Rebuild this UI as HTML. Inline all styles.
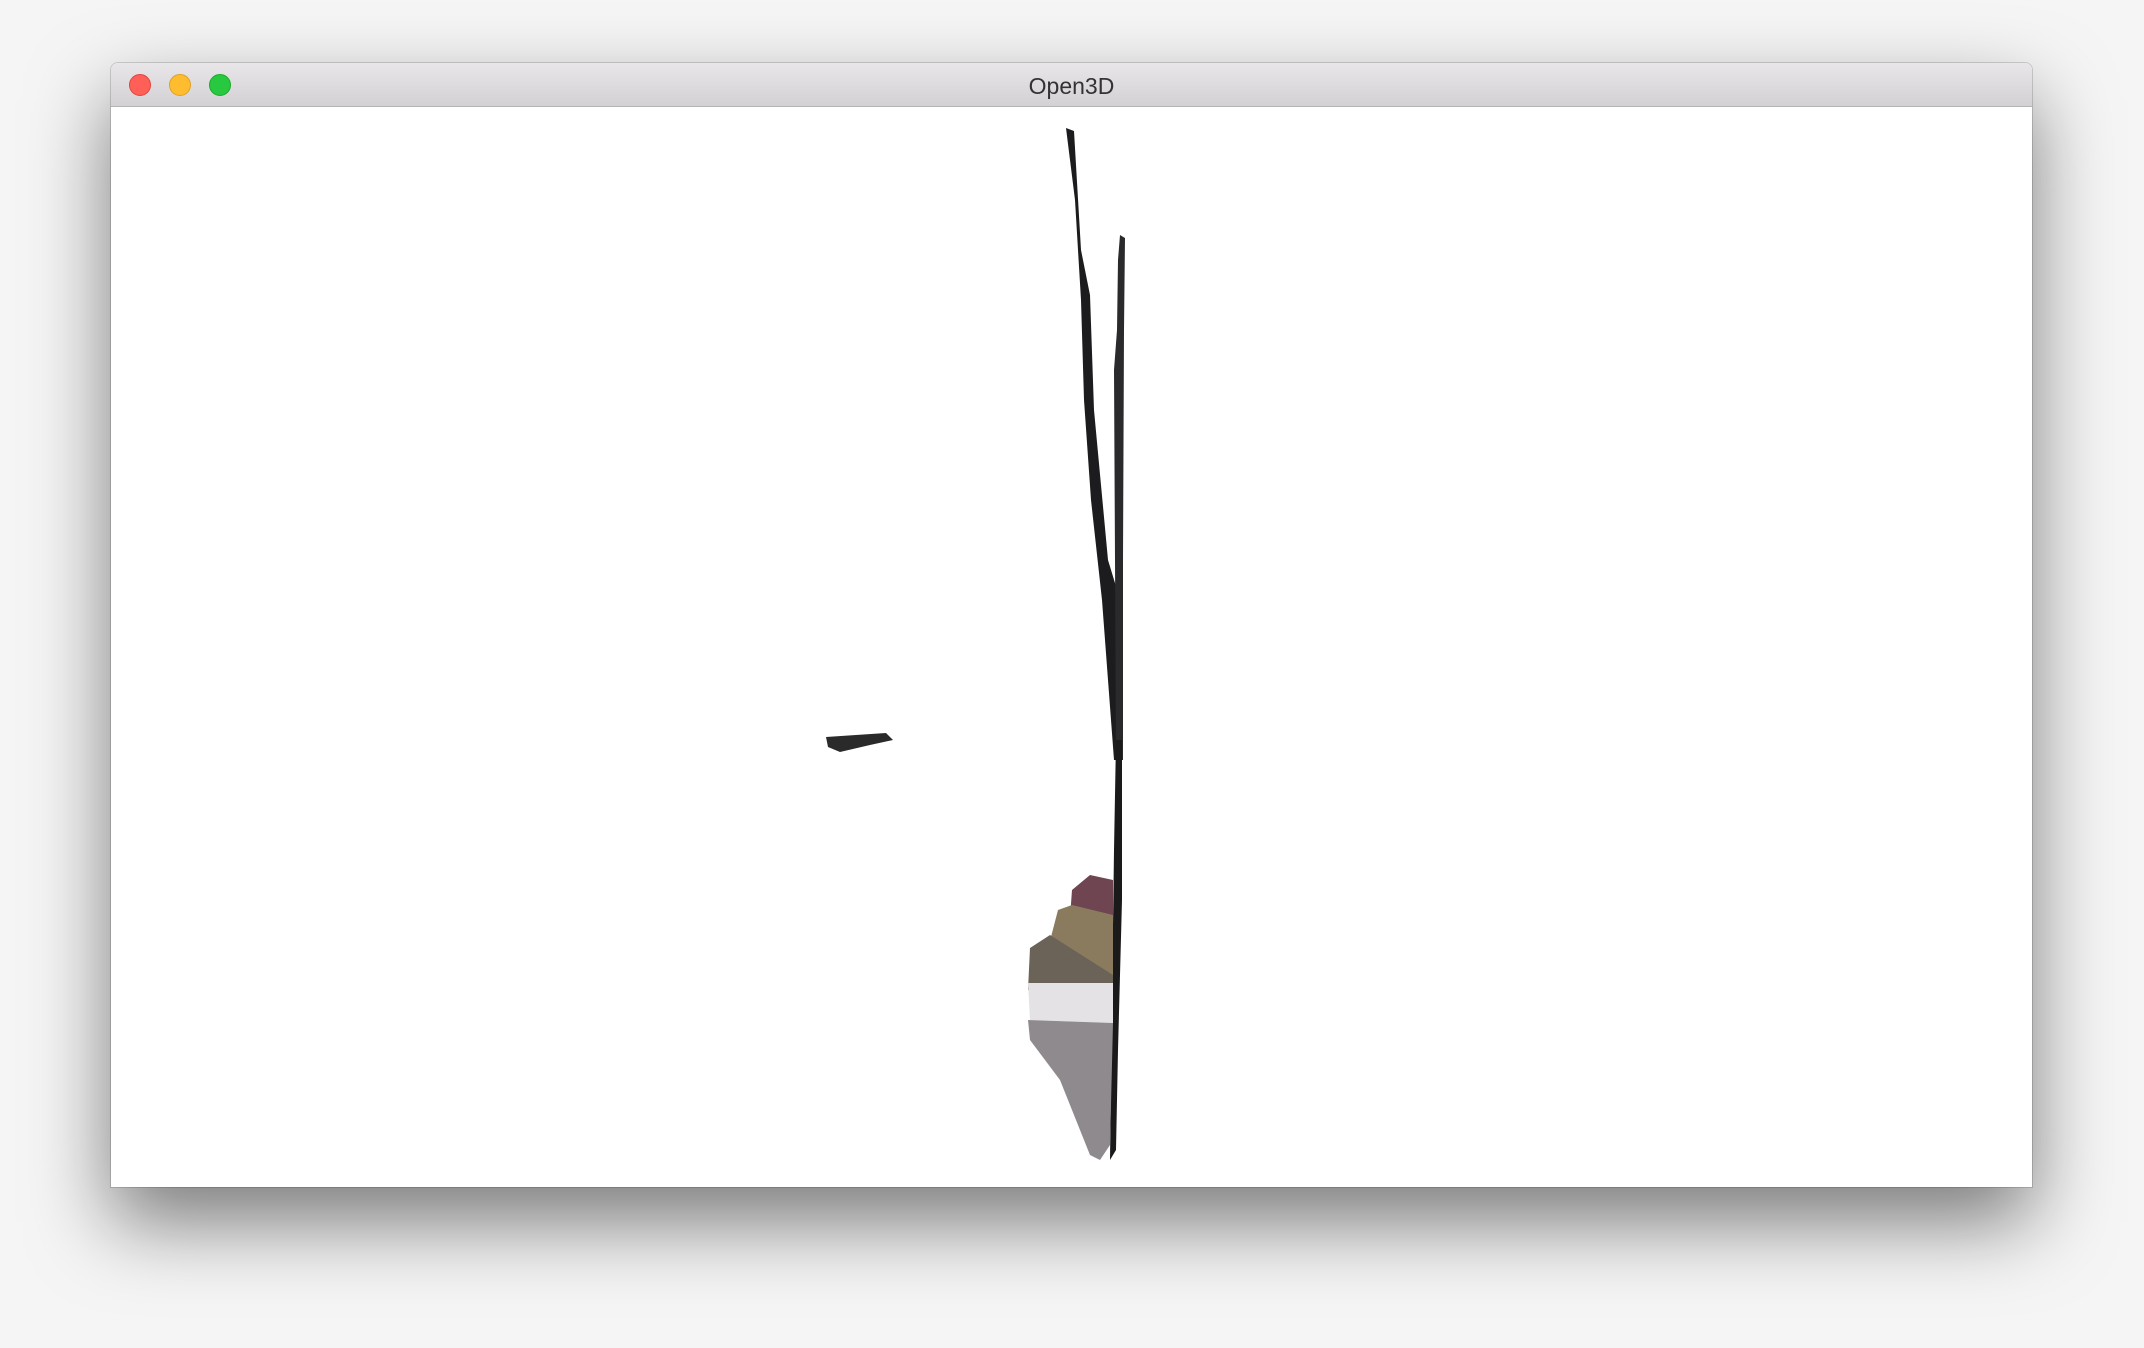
<!DOCTYPE html>
<html><head><style>
html,body{margin:0;padding:0;width:2144px;height:1348px;background:#f5f5f5;overflow:hidden}
.win{position:absolute;left:111px;top:63px;width:1921px;height:1124px;background:#fff;border-radius:7px 7px 0 0;box-shadow:0 35px 80px rgba(0,0,0,.5),0 0 0 1px rgba(0,0,0,.15);overflow:hidden}
.tb{position:absolute;left:0;top:0;width:100%;height:44px;background:linear-gradient(#e8e6e8,#d3d1d3);border-bottom:1px solid #b5b3b5;box-sizing:border-box}
.l{position:absolute;top:11px;width:22px;height:22px;border-radius:50%;box-sizing:border-box}
.t{position:absolute;left:0;right:0;top:10px;text-align:center;font:23px "Liberation Sans",sans-serif;color:#333}
svg{position:absolute;left:0;top:0}
</style></head><body>
<div class="win">
<div class="tb">
<div class="l" style="left:18px;background:#fe5f57;border:1px solid #e0443e"></div>
<div class="l" style="left:58px;background:#febc2e;border:1px solid #dea123"></div>
<div class="l" style="left:98px;background:#28c840;border:1px solid #1aab29"></div>
<div class="t">Open3D</div>
</div>
</div>
<svg width="2144" height="1348" viewBox="0 0 2144 1348">
<polygon points="1066,128 1074,131 1081,250 1090,295 1094,410 1108,560 1118,593 1120,760 1114,760 1102,600 1091,500 1084,400 1081,300 1075,200" fill="#1c1c1e"/>
<polygon points="1120,235 1125,238 1124,330 1123,560 1123,760 1116,760 1115,560 1114,370 1117,330 1118,260" fill="#2a2a2c"/>
<polygon points="1116,740 1122,740 1122,900 1118,1050 1116,1150 1110,1160 1112,1000 1114,850" fill="#1a1a1a"/>
<polygon points="1072,890 1090,875 1113,880 1113,915 1070,918" fill="#6e4550"/>
<polygon points="1058,910 1072,905 1113,915 1113,975 1050,980 1045,960" fill="#8a7a5e"/>
<polygon points="1030,948 1050,935 1113,975 1113,983 1040,983 1028,990" fill="#6b6358"/>
<polygon points="1028,983 1113,983 1113,1023 1030,1020" fill="#e4e2e4"/>
<polygon points="1028,1020 1113,1023 1110,1145 1100,1160 1090,1155 1060,1080 1030,1040" fill="#8f8a8d"/>
<polygon points="826,737 886,733 893,740 870,745 840,752 828,747" fill="#2a2a2a"/>
</svg>
</body></html>
